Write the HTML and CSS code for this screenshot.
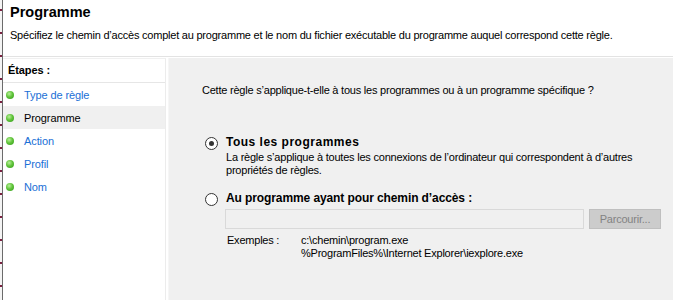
FILE: index.html
```html
<!DOCTYPE html>
<html lang="fr">
<head>
<meta charset="utf-8">
<title>Programme</title>
<link rel="stylesheet" href="styles.css">
</head>
<body>
<div class="window">
  <div class="frame"></div>
  <div class="content">
    <header class="header">
      <h1 class="title">Programme</h1>
      <p class="subtitle">Spécifiez le chemin d’accès complet au programme et le nom du fichier exécutable du programme auquel correspond cette règle.</p>
    </header>
    <div class="main">
      <nav class="steps">
        <div class="steps-head">Étapes :</div>
        <ul class="step-list">
          <li class="step"><span class="dot"></span><span class="link">Type de règle</span></li>
          <li class="step current"><span class="dot"></span><span>Programme</span></li>
          <li class="step"><span class="dot"></span><span class="link">Action</span></li>
          <li class="step"><span class="dot"></span><span class="link">Profil</span></li>
          <li class="step"><span class="dot"></span><span class="link">Nom</span></li>
        </ul>
      </nav>
      <section class="pane">
        <p class="question">Cette règle s’applique-t-elle à tous les programmes ou à un programme spécifique ?</p>
        <div class="option">
          <span class="radio checked"></span>
          <div class="option-body">
            <div class="option-label">Tous les programmes</div>
            <div class="option-desc">La règle s’applique à toutes les connexions de l’ordinateur qui correspondent à d’autres<br>propriétés de règles.</div>
          </div>
        </div>
        <div class="option second">
          <span class="radio"></span>
          <div class="option-body">
            <div class="option-label">Au programme ayant pour chemin d’accès :</div>
            <div class="path-row">
              <div class="path-input"></div>
              <div class="browse">Parcourir...</div>
            </div>
            <div class="examples">
              <span class="ex-label">Exemples :</span>
              <span class="ex-values">c:\chemin\program.exe<br>%ProgramFiles%\Internet Explorer\iexplore.exe</span>
            </div>
          </div>
        </div>
      </section>
    </div>
  </div>
</div>
</body>
</html>
```
FILE: styles.css
```css
html, body {
  margin: 0;
  padding: 0;
  width: 673px;
  height: 300px;
  overflow: hidden;
  background: #ffffff;
}
body {
  font-family: "Liberation Sans", Arial, sans-serif;
  font-size: 11px;
  letter-spacing: -0.22px;
  color: #000;
}
.window {
  display: flex;
  height: 300px;
}
.frame {
  width: 2px;
  flex: none;
  border-right: 1px solid #6b6b6b;
  background: repeating-linear-gradient(to bottom, #f4f4f4 0 9px, #7a2040 9px 11px, #f4f4f4 11px 23px);
}
.content {
  flex: 1;
  display: flex;
  flex-direction: column;
  min-width: 0;
}
.header {
  padding-left: 7px;
  border-bottom: 1px solid #e3e3e3;
  box-sizing: border-box;
  height: 57px;
}
.title {
  margin: 0;
  padding-top: 3px;
  font-size: 14.5px;
  font-weight: bold;
  line-height: 18px;
  letter-spacing: 0;
}
.subtitle {
  margin: 6px 0 0 0;
  font-size: 11px;
  line-height: 16px;
}
.main {
  flex: 1;
  display: flex;
  padding-top: 1px;
}
.steps {
  width: 162px;
  flex: none;
  border-right: 1px solid #ececec;
  border-top: 1px solid #f0f0f0;
}
.steps-head {
  height: 23px;
  line-height: 23px;
  padding-left: 5px;
  font-weight: bold;
  font-size: 11px;
  letter-spacing: -0.1px;
  border-bottom: 1px solid #e6e6e6;
}
.step-list {
  list-style: none;
  margin: 0;
  padding: 0;
}
.step {
  height: 23px;
  display: flex;
  align-items: center;
  font-size: 11px;
  letter-spacing: -0.1px;
}
.step.current {
  background: #f0f0f0;
}
.dot {
  width: 8px;
  height: 8px;
  border-radius: 50%;
  margin: 0 10px 0 3px;
  background: radial-gradient(circle at 40% 35%, #b8f09a 0, #62c43c 45%, #2f9a16 100%);
}
.link {
  color: #1a6fd6;
}
.pane {
  flex: 1;
  margin-left: 2px;
  background: #f0f0f0;
  border-left: 1px solid #f6f6f6;
  padding: 25px 0 0 33px;
}
.question {
  margin: 0;
  line-height: 15px;
}
.option {
  display: flex;
  margin-top: 37px;
}
.option.second {
  margin-top: 14px;
}
.radio {
  width: 11px;
  height: 11px;
  border: 1px solid #333;
  border-radius: 50%;
  background: #fff;
  flex: none;
  margin: 2px 8px 0 3px;
  position: relative;
}
.radio.checked::after {
  content: "";
  position: absolute;
  left: 3px;
  top: 3px;
  width: 5px;
  height: 5px;
  border-radius: 50%;
  background: #333;
}
.option-body {
  display: flex;
  flex-direction: column;
}
.option-label {
  font-weight: bold;
  font-size: 12px;
  letter-spacing: 0.5px;
  line-height: 15px;
}
.second .option-label {
  letter-spacing: -0.1px;
}
.option-desc {
  line-height: 13px;
  margin-top: 1px;
}
.path-row {
  display: flex;
  margin-top: 3px;
  margin-left: -1px;
}
.path-input {
  width: 357px;
  height: 18px;
  border: 1px solid #d9d9d9;
  background: #f0f0f0;
}
.browse {
  width: 70px;
  height: 18px;
  margin-left: 5px;
  border: 1px solid #bfbfbf;
  background: #cccccc;
  color: #838383;
  line-height: 18px;
  text-align: center;
}
.examples {
  display: flex;
  margin-top: 5px;
  line-height: 13px;
}
.ex-label {
  width: 74px;
  padding-left: 1px;
}
```
